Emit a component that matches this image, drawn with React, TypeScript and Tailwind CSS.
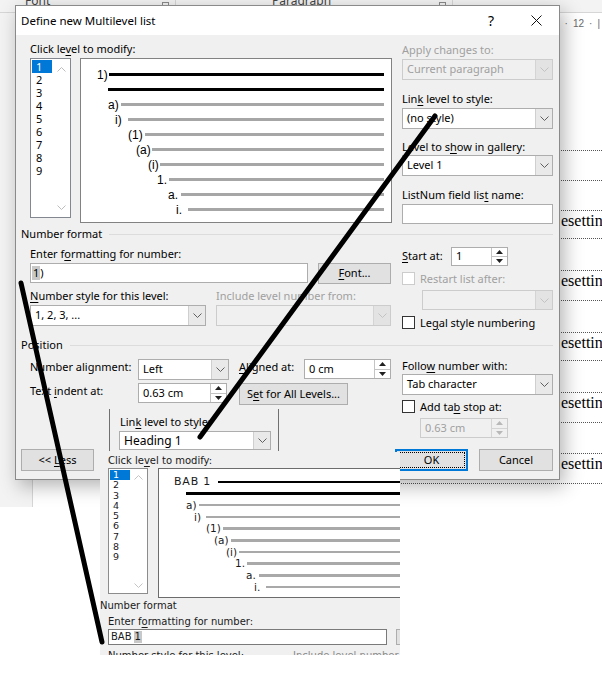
import React from 'react'

type Row = { label: string; pad: string; w: string; black?: boolean }

const mainRows: Row[] = [
  { label: '1)', pad: 'pl-[16px]', w: 'w-[12px]', black: true },
  { label: '', pad: 'pl-[27px]', w: 'w-0', black: true },
  { label: 'a)', pad: 'pl-[27px]', w: 'w-[13px]' },
  { label: 'i)', pad: 'pl-[34px]', w: 'w-[13px]' },
  { label: '(1)', pad: 'pl-[47px]', w: 'w-[17px]' },
  { label: '(a)', pad: 'pl-[55px]', w: 'w-[16px]' },
  { label: '(i)', pad: 'pl-[67px]', w: 'w-[12px]' },
  { label: '1.', pad: 'pl-[76px]', w: 'w-[12px]' },
  { label: 'a.', pad: 'pl-[87px]', w: 'w-[13px]' },
  { label: 'i.', pad: 'pl-[95px]', w: 'w-[12px]' },
]

const insetRows: Row[] = [
  { label: 'BAB 1', pad: 'pl-[15px]', w: 'w-[44px]', black: true },
  { label: '', pad: 'pl-[27px]', w: 'w-0', black: true },
  { label: 'a)', pad: 'pl-[27px]', w: 'w-[13px]' },
  { label: 'i)', pad: 'pl-[35px]', w: 'w-[12px]' },
  { label: '(1)', pad: 'pl-[47px]', w: 'w-[17px]' },
  { label: '(a)', pad: 'pl-[55px]', w: 'w-[17px]' },
  { label: '(i)', pad: 'pl-[67px]', w: 'w-[13px]' },
  { label: '1.', pad: 'pl-[76px]', w: 'w-[12px]' },
  { label: 'a.', pad: 'pl-[87px]', w: 'w-[13px]' },
  { label: 'i.', pad: 'pl-[95px]', w: 'w-[12px]' },
]

const levels = [1, 2, 3, 4, 5, 6, 7, 8, 9]

// document bands behind the dialog: height and whether a line of text sits in it
const bands = [
  { h: 'h-[30px]', text: false },
  { h: 'h-[30px]', text: false },
  { h: 'h-[28px]', text: true },
  { h: 'h-[32px]', text: false },
  { h: 'h-[30px]', text: true },
  { h: 'h-[32px]', text: false },
  { h: 'h-[28px]', text: true },
  { h: 'h-[32px]', text: false },
  { h: 'h-[30px]', text: true },
  { h: 'h-[31px]', text: false },
  { h: 'h-[30px]', text: true },
]

function Chevron({ color = '#5f5f5f' }: { color?: string }) {
  return (
    <svg width="9" height="5" viewBox="0 0 9 5" fill="none">
      <path d="M0.5 0.5L4.5 4.5L8.5 0.5" stroke={color} strokeWidth="1" />
    </svg>
  )
}

function ChevronUp({ color = '#bdbdbd' }: { color?: string }) {
  return (
    <svg width="9" height="5" viewBox="0 0 9 5" fill="none">
      <path d="M0.5 4.5L4.5 0.5L8.5 4.5" stroke={color} strokeWidth="1" />
    </svg>
  )
}

function Combo({ text, className = '', disabled }: { text?: React.ReactNode; className?: string; disabled?: boolean }) {
  return (
    <div
      className={`flex shrink-0 border ${disabled ? 'border-[#cccccc] bg-[#f0f0f0] text-[#a0a0a0]' : 'border-[#adadad] bg-white'} ${className}`}
    >
      <div className="flex-1 flex items-center pl-[4px] whitespace-nowrap overflow-hidden">{text}</div>
      <div
        className={`w-[17px] flex items-center justify-center border-l ${disabled ? 'border-[#d4d4d4] bg-[#e3e3e3]' : 'border-[#cfcfcf] bg-[#e9e9e9]'}`}
      >
        <Chevron color={disabled ? '#c2c2c2' : '#5f5f5f'} />
      </div>
    </div>
  )
}

function Spin({ text, className = '', disabled }: { text: string; className?: string; disabled?: boolean }) {
  const arrow = disabled ? '#b8b8b8' : '#202020'
  return (
    <div
      className={`flex shrink-0 border ${disabled ? 'border-[#cccccc] bg-[#f0f0f0] text-[#a0a0a0]' : 'border-[#adadad] bg-white'} ${className}`}
    >
      <div className="flex-1 flex items-center pl-[4px] whitespace-nowrap">{text}</div>
      <div className={`w-[16px] flex flex-col border-l ${disabled ? 'border-[#d4d4d4]' : 'border-[#c4c4c4]'}`}>
        <div className={`flex-1 flex items-center justify-center border-b ${disabled ? 'border-[#d4d4d4]' : 'border-[#c4c4c4]'}`}>
          <svg width="7" height="4" viewBox="0 0 7 4">
            <path d="M0 4L3.5 0L7 4Z" fill={arrow} />
          </svg>
        </div>
        <div className="flex-1 flex items-center justify-center">
          <svg width="7" height="4" viewBox="0 0 7 4">
            <path d="M0 0L3.5 4L7 0Z" fill={arrow} />
          </svg>
        </div>
      </div>
    </div>
  )
}

function Check({ label, disabled }: { label: React.ReactNode; disabled?: boolean }) {
  return (
    <div className="flex items-center h-[13px]">
      <div className={`w-[13px] h-[13px] border bg-white ${disabled ? 'border-[#cccccc]' : 'border-[#333333]'}`} />
      <span className={`ml-[5px] leading-[16px] whitespace-nowrap ${disabled ? 'text-[#a0a0a0]' : ''}`}>{label}</span>
    </div>
  )
}

function Btn({ children, className = '' }: { children: React.ReactNode; className?: string }) {
  return (
    <div className={`flex shrink-0 items-center justify-center border border-[#adadad] bg-[#e1e1e1] ${className}`}>
      {children}
    </div>
  )
}

function U({ children }: { children: React.ReactNode }) {
  return <span className="underline underline-offset-[2px]">{children}</span>
}

function SectionHeader({ title, className = '' }: { title: string; className?: string }) {
  return (
    <div className={`flex items-center h-4 ${className}`}>
      <span className="leading-4">{title}</span>
      <div className="flex-1 h-px bg-[#dcdcdc] ml-[7px]" />
    </div>
  )
}

function WordBackground() {
  return (
    <div className="flex flex-col">
      {/* ribbon group names, mostly cut off */}
      <div className="h-[13px] bg-[#f3f3f3] border-b border-[#d6d6d6] flex overflow-hidden text-[12px] leading-[12px] text-[#444]">
        <div className="w-[176px] shrink-0 border-r border-[#d6d6d6] flex">
          <span className="ml-[25px] -mt-[5px]">Font</span>
          <span className="ml-auto mr-[6px] mt-[2px] w-[7px] h-[7px] border border-[#8a8a8a]" />
        </div>
        <div className="w-[277px] shrink-0 border-r border-[#d6d6d6] flex">
          <span className="ml-[96px] -mt-[5px]">Paragraph</span>
          <span className="ml-auto mr-[6px] mt-[2px] w-[7px] h-[7px] border border-[#8a8a8a]" />
        </div>
      </div>
      <div className="flex">
        <div className="w-[33px] shrink-0 h-[494px] bg-[#f3f3f3] border-r border-[#d6d6d6]" />
        <div className="flex-1 min-w-0 overflow-hidden flex flex-col">
          <div className="h-[41px] bg-white flex flex-col">
            <div className="h-[20px] flex items-center justify-end gap-[5px] pr-[2px] text-[10px] text-[#6a6a6a] font-['Liberation_Sans',sans-serif]">
              <span>·</span>
              <span>12</span>
              <span>·</span>
              <span>|</span>
            </div>
          </div>
          <div className="h-[96px]" />
          <div className="ml-[266px] flex flex-col font-['Liberation_Serif',serif] text-[16px] text-black">
            {bands.map((b, i) => (
              <div key={i} className={`${b.h} border-t border-dotted border-[#555555] overflow-hidden whitespace-nowrap`}>
                {b.text && <div className="leading-[20px] pl-[262px]">esettings</div>}
              </div>
            ))}
            <div className="border-t border-dotted border-[#555555]" />
          </div>
        </div>
      </div>
    </div>
  )
}

function Dialog() {
  return (
    <div className="absolute left-[15px] top-[5px] w-[545px] h-[475px] bg-[#f0f0f0] border border-[#8a8a8a] shadow-[4px_6px_18px_rgba(0,0,0,0.3)]">
      {/* title bar */}
      <div className="h-[29px] bg-white flex items-center pl-[5px]">
        <span className="flex-1 text-[11.5px]">Define new Multilevel list</span>
        <span className="text-[14px] mr-[37px]">?</span>
        <svg width="11" height="11" viewBox="0 0 11 11" className="mr-[17px]">
          <path d="M0.5 0.5L10.5 10.5M10.5 0.5L0.5 10.5" stroke="#111" strokeWidth="1" />
        </svg>
      </div>

      <div className="pl-[5px] pr-[6px]">
        {/* level list and preview */}
        <div className="flex mt-[6px]">
          <div className="w-[371px] shrink-0 pl-[9px]">
            <div className="h-4 leading-4">
              Click le<U>v</U>el to modify:
            </div>
            <div className="flex mt-[1px]">
              <div className="w-[41px] h-[160px] bg-white border border-[#828790] flex">
                <div className="w-[21px] pt-[1px] pl-[1px]">
                  {levels.map((n) => (
                    <div
                      key={n}
                      className={`h-[13px] leading-[13px] w-[20px] pl-[4px] ${n === 1 ? 'bg-[#0078d7] text-white' : ''}`}
                    >
                      {n}
                    </div>
                  ))}
                </div>
                <div className="flex-1 flex flex-col items-center justify-between pt-[8px] pb-[7px]">
                  <ChevronUp />
                  <Chevron color="#bdbdbd" />
                </div>
              </div>
              <div className="ml-[9px] w-[312px] h-[165px] bg-white border border-[#828282] pt-[8px] pr-[7px] font-['Liberation_Sans',sans-serif] text-[12px]">
                {mainRows.map((r, i) => (
                  <div key={i} className={`flex items-center h-[15px] ${r.pad}`}>
                    <span className={`${r.w} shrink-0 leading-none whitespace-nowrap`}>{r.label}</span>
                    <div className={`flex-1 h-[3px] ${r.black ? 'bg-black' : 'bg-[#a6a6a6]'}`} />
                  </div>
                ))}
              </div>
            </div>
          </div>

          <div className="ml-[10px] w-[151px] shrink-0">
            <div className="h-4 leading-4 mt-[1px] text-[#a0a0a0]">Apply changes to:</div>
            <Combo disabled text="Current paragraph" className="mt-[1px] h-[21px]" />
            <div className="h-4 leading-4 mt-[11px]">
              Lin<U>k</U> level to style:
            </div>
            <Combo text="(no style)" className="mt-[1px] h-[21px]" />
            <div className="h-4 leading-4 mt-[10px]">
              Level to s<U>h</U>ow in gallery:
            </div>
            <Combo text="Level 1" className="h-[21px]" />
            <div className="h-4 leading-4 mt-[11px]">
              ListNum field lis<U>t</U> name:
            </div>
            <div className="mt-[1px] h-[20px] bg-white border border-[#adadad]" />
          </div>
        </div>

        <SectionHeader title="Number format" className="mt-[2px]" />

        <div className="flex">
          <div className="w-[371px] shrink-0 pl-[9px]">
            <div className="h-4 leading-4 mt-[4px]">
              Enter f<U>o</U>rmatting for number:
            </div>
            <div className="flex mt-[1px]">
              <div className="w-[278px] shrink-0 h-[20px] bg-white border border-[#adadad] flex items-center pl-[1px]">
                <span className="bg-[#c8c8c8] px-[1px] leading-[14px]">1</span>
                <span className="leading-[14px]">)</span>
              </div>
              <Btn className="ml-[10px] w-[73px] h-[21px]">
                <span>
                  <U>F</U>ont...
                </span>
              </Btn>
            </div>
            <div className="flex mt-[4px] h-4 leading-4">
              <span className="w-[186px] shrink-0">
                <U>N</U>umber style for this level:
              </span>
              <span className="text-[#a0a0a0]">Include level number from:</span>
            </div>
            <div className="flex mt-[1px]">
              <Combo text="1, 2, 3, ..." className="w-[176px] h-[21px]" />
              <Combo disabled className="ml-[10px] w-[175px] h-[21px]" />
            </div>
          </div>

          <div className="ml-[10px] w-[151px] shrink-0">
            <div className="flex items-center mt-[5px] h-[19px]">
              <span className="w-[49px] shrink-0">
                <U>S</U>tart at:
              </span>
              <Spin text="1" className="w-[57px] h-[19px]" />
            </div>
            <div className="mt-[6px]">
              <Check disabled label="Restart list after:" />
            </div>
            <Combo disabled className="mt-[5px] ml-[20px] w-[131px] h-[20px]" />
            <div className="mt-[6px]">
              <Check
                label={
                  <>
                    Le<U>g</U>al style numbering
                  </>
                }
              />
            </div>
          </div>
        </div>

        <SectionHeader title="Position" className="mt-[8px]" />

        <div className="flex">
          <div className="w-[371px] shrink-0 pl-[9px]">
            <div className="flex items-start mt-[6px]">
              <span className="w-[108px] shrink-0 leading-4">Number alignment:</span>
              <Combo text="Left" className="w-[91px] h-[21px]" />
              <span className="ml-[10px] w-[65px] shrink-0 leading-4">
                <U>A</U>ligned at:
              </span>
              <Spin text="0 cm" className="w-[87px] h-[20px]" />
            </div>
            <div className="flex items-start mt-[3px]">
              <span className="w-[108px] shrink-0 leading-4">
                Text <U>i</U>ndent at:
              </span>
              <Spin text="0.63 cm" className="w-[89px] h-[20px]" />
              <Btn className="ml-[12px] w-[109px] h-[22px]">
                <span>
                  S<U>e</U>t for All Levels...
                </span>
              </Btn>
            </div>
          </div>

          <div className="ml-[10px] w-[151px] shrink-0">
            <div className="h-4 leading-4 mt-[5px]">
              Follo<U>w</U> number with:
            </div>
            <Combo text="Tab character" className="h-[21px]" />
            <div className="mt-[5px]">
              <Check
                label={
                  <>
                    Add ta<U>b</U> stop at:
                  </>
                }
              />
            </div>
            <Spin disabled text="0.63 cm" className="mt-[5px] ml-[18px] w-[88px] h-[20px]" />
          </div>
        </div>

        {/* dialog buttons */}
        <div className="flex mt-[11px]">
          <Btn className="w-[73px] h-[22px]">
            <span>
              &lt;&lt; <U>L</U>ess
            </span>
          </Btn>
          <div className="flex-1" />
          <div className="w-[73px] h-[22px] border-2 border-[#0078d7] bg-[#e1e1e1] p-px">
            <div className="h-full border border-dotted border-black flex items-center justify-center">OK</div>
          </div>
          <Btn className="ml-[11px] w-[74px] h-[22px]">Cancel</Btn>
        </div>
      </div>
    </div>
  )
}

function InsetLinkStyle() {
  return (
    <div className="absolute left-[109px] top-[405px] w-[170px] h-[47px] bg-[#f0f0f0]">
      <div className="mt-[4px] h-[42px] border-x border-[#707070] pl-[9px] pt-[5px]">
        <div className="h-4 leading-4 pl-[1px]">
          Lin<U>k</U> level to style:
        </div>
        <Combo text={<span className="text-[12px]">Heading 1</span>} className="mt-[1px] w-[152px] h-[19px]" />
      </div>
    </div>
  )
}

function InsetLevels() {
  return (
    <div className="absolute left-[100px] top-[452px] w-[300px] h-[203px] bg-[#f0f0f0] overflow-hidden font-['DejaVu_Sans',sans-serif] text-[10px] text-[#1a1a1a]">
      <div className="pl-[8px] mt-[3px] leading-[12px] whitespace-nowrap">
        Click le<U>v</U>el to modify:
      </div>
      <div className="flex pl-[8px] mt-[1px]">
        <div className="w-[40px] h-[126px] bg-white border border-[#8c8c8c] flex shrink-0">
          <div className="w-[21px] pt-[1px] pl-px">
            {levels.map((n) => (
              <div
                key={n}
                className={`h-[10.3px] leading-[10.3px] w-[20px] pl-[3px] text-[9.5px] ${n === 1 ? 'bg-[#0078d7] text-white' : ''}`}
              >
                {n}
              </div>
            ))}
          </div>
          <div className="flex-1 flex flex-col items-center justify-between pt-[6px] pb-[5px]">
            <ChevronUp color="#c4c4c4" />
            <Chevron color="#c4c4c4" />
          </div>
        </div>
        <div className="ml-[10px] w-[250px] h-[130px] shrink-0 bg-white border border-[#6c6c6c] pt-[7px] text-[10.5px]">
          {insetRows.map((r, i) => (
            <div key={i} className={`flex items-center h-[11.7px] ${r.pad}`}>
              <span
                className={`${r.w} shrink-0 leading-none whitespace-nowrap ${i === 0 ? 'text-[11px] tracking-[0.8px]' : ''}`}
              >
                {r.label}
              </span>
              <div className={`flex-1 h-[2.5px] ${r.black ? 'bg-black' : 'bg-[#a9a9a9]'}`} />
            </div>
          ))}
        </div>
      </div>
      <div className="mt-[2px] leading-[12px] whitespace-nowrap">Number format</div>
      <div className="pl-[8px] mt-[4px] leading-[12px] whitespace-nowrap">
        Enter f<U>o</U>rmatting for number:
      </div>
      <div className="flex pl-[8px] mt-[1px]">
        <div className="w-[279px] h-[16px] shrink-0 bg-white border border-[#7a7a7a] flex items-center pl-[2px]">
          <span className="leading-[12px]">BAB </span>
          <span className="bg-[#c8c8c8] leading-[12px] px-px ml-[2px]">1</span>
        </div>
        <div className="ml-[9px] w-[20px] h-[16px] shrink-0 border border-[#adadad] bg-[#e1e1e1]" />
      </div>
      <div className="flex pl-[8px] mt-[5px] leading-[12px] whitespace-nowrap">
        <span className="w-[185px] shrink-0">
          <U>N</U>umber style for this level:
        </span>
        <span className="text-[#8a8a8a]">Include level number from:</span>
      </div>
    </div>
  )
}

function Strokes() {
  return (
    <svg className="absolute left-0 top-0 pointer-events-none" width="602" height="677" viewBox="0 0 602 677">
      <line x1="435" y1="116" x2="200" y2="437" stroke="black" strokeWidth="5" strokeLinecap="round" />
      <line x1="21" y1="283" x2="102" y2="642" stroke="black" strokeWidth="5" strokeLinecap="round" />
    </svg>
  )
}

export default function App() {
  return (
    <div className="relative w-[602px] h-[677px] overflow-hidden bg-white font-['Noto_Sans',sans-serif] text-[11px] text-black">
      <WordBackground />
      <Dialog />
      <InsetLinkStyle />
      <InsetLevels />
      <Strokes />
    </div>
  )
}
